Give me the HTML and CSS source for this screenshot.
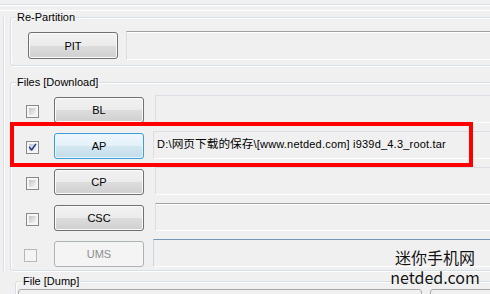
FILE: index.html
```html
<!DOCTYPE html>
<html>
<head>
<meta charset="utf-8">
<title>Odin</title>
<link rel="stylesheet" href="styles.css">
</head>
<body>
<div class="tab-edge top"></div>
<div class="tab-edge mid"></div>
<div class="frame">
  <section class="group repart">
    <div class="legend">Re-Partition</div>
    <div class="pit-row">
      <div class="btn">PIT</div>
      <div class="field dark"></div>
    </div>
  </section>
  <section class="group files">
    <div class="legend">Files [Download]</div>
    <div class="rows">
      <div class="row">
        <span class="cb"></span>
        <div class="btn">BL</div>
        <div class="field"></div>
      </div>
      <div class="row">
        <span class="cb"><svg viewBox="0 0 11 11" width="11" height="11"><path d="M2.6 5.4 L4.6 8 L8.6 2.4" fill="none" stroke="#27408b" stroke-width="1.6" stroke-linecap="round" stroke-linejoin="round"/></svg></span>
        <div class="btn focus">AP</div>
        <div class="field wide">D:\<span class="cjk">网页下载的保存</span>\[www.netded.com] i939d_4.3_root.tar</div>
      </div>
      <div class="row">
        <span class="cb"></span>
        <div class="btn">CP</div>
        <div class="field"></div>
      </div>
      <div class="row">
        <span class="cb"></span>
        <div class="btn">CSC</div>
        <div class="field dark"></div>
      </div>
      <div class="row">
        <span class="cb off"></span>
        <div class="btn off">UMS</div>
        <div class="field wide blue"></div>
      </div>
    </div>
  </section>
</div>
<section class="group dump">
  <div class="legend">File [Dump]</div>
  <div class="dump-row">
    <div class="box long"></div>
    <div class="box"></div>
  </div>
</section>
<div class="highlight"></div>
<div class="watermark">
  <div class="wm-line">迷你手机网</div>
  <div class="wm-line">netded.com</div>
</div>
</body>
</html>
```
FILE: styles.css
```css
* { box-sizing: border-box; }
html, body { margin: 0; padding: 0; }
body {
  width: 490px;
  height: 294px;
  overflow: hidden;
  position: relative;
  background: #f0f0f0;
  font-family: "Liberation Sans", Arial, sans-serif;
  font-size: 11px;
  color: #000;
}
.tab-edge.top { height: 5px; border-bottom: 1px solid #d5dfe5; }
.tab-edge.mid { height: 6px; border-top: 1px solid #fff; border-bottom: 1px solid #fff; }

.frame {
  margin: 6px 0 0 3px;
  padding-left: 6px;
  border-left: 1px solid #d5dfe5;
  box-shadow: inset 1px 0 0 #fff;
}
.group {
  width: 520px;
  border: 1px solid #d5dfe5;
  border-radius: 3px;
  box-shadow: inset 1px 1px 0 #fff, 1px 1px 0 #fff;
}
.legend {
  display: block;
  width: max-content;
  margin: -7px 0 0 5px;
  padding: 0 1px;
  line-height: 13px;
  background: #f0f0f0;
}
.repart { padding-bottom: 5px; }
.pit-row {
  display: flex;
  align-items: center;
  margin: 7px 0 0 17px;
  height: 29px;
}
.pit-row .btn { height: 27px; margin-right: 8px; }
.pit-row .field { height: 29px; flex: 1; }

.files { margin-top: 16px; padding-bottom: 3px; }
.rows {
  display: flex;
  flex-direction: column;
  gap: 8px;
  margin: 6px 0 0 15px;
}
.row {
  display: flex;
  align-items: flex-start;
  height: 28px;
}
.row .btn { margin: 2px 11px 0 15px; height: 26px; }
.row .field { flex: 1; height: 28px; }
.row .field.wide { margin-left: -2px; }

.btn {
  width: 90px;
  flex: none;
  display: flex;
  align-items: center;
  justify-content: center;
  border: 1px solid #707070;
  border-radius: 3px;
  background: linear-gradient(#f2f2f2 0%, #ebebeb 50%, #dddddd 51%, #cfcfcf 100%);
  box-shadow: inset 0 0 0 1px #fbfbfb;
  color: #000;
}
.btn.focus {
  border-color: #3c9fd8;
  background: linear-gradient(#eef7fc 0%, #e3f1f9 50%, #d3e7f1 51%, #c4dce9 100%);
  box-shadow: inset 0 0 0 1px #e8f6fd;
}
.btn.off {
  border-color: #adb2b5;
  background: #f4f4f4;
  box-shadow: none;
  color: #8d8d8d;
}

.cb {
  flex: none;
  width: 13px;
  height: 13px;
  margin-top: 10px;
  border: 1px solid #8a8a8a;
  background: linear-gradient(135deg, #bfc4ca, #f7f7f7) center / 7px 7px no-repeat, #f6f6f6;
}
.cb svg { display: block; }
.cb.off {
  margin-left: -2px;
  margin-right: 2px;
  border-color: #b8b8b8;
  background: #f4f4f4;
}

.field {
  background: #f0f0f0;
  border: 1px solid #dadee3;
  border-right-color: #fff;
  border-bottom-color: #fff;
  padding: 4px 0 0 3px;
  line-height: 13px;
  letter-spacing: 0.2px;
  white-space: nowrap;
  overflow: hidden;
}
.field.dark { border-top-color: #a0a0a0; box-shadow: inset 0 1px 0 #fff; }
.field.blue { border-top-color: #7597b8; border-left-color: #c9d5e0; }
.cjk {
  font-family: "Noto Sans CJK SC", sans-serif;
  font-size: 11.7px;
  letter-spacing: 0;
}

.dump { margin: 10px 0 0 15px; }
.dump .legend { margin-left: 6px; }
.dump-row {
  display: flex;
  gap: 8px;
  margin: 1px 0 0 2px;
}
.box {
  height: 20px;
  width: 100px;
  border: 1px solid #a9a9a9;
  border-radius: 3px;
  background: #f0f0f0;
}
.box.long { width: 404px; }

.highlight {
  position: absolute;
  left: 10px;
  top: 122px;
  width: 463px;
  height: 45px;
  border: 4px solid #fe0000;
}
.watermark {
  position: absolute;
  left: 390px;
  top: 247px;
  width: 90px;
  text-align: center;
  font-family: "Noto Sans CJK SC", sans-serif;
  font-size: 16px;
  color: #111;
  text-shadow: 0 0 1px #fff, 0 0 1px #fff;
}
.wm-line { height: 20px; line-height: 20px; }
```
